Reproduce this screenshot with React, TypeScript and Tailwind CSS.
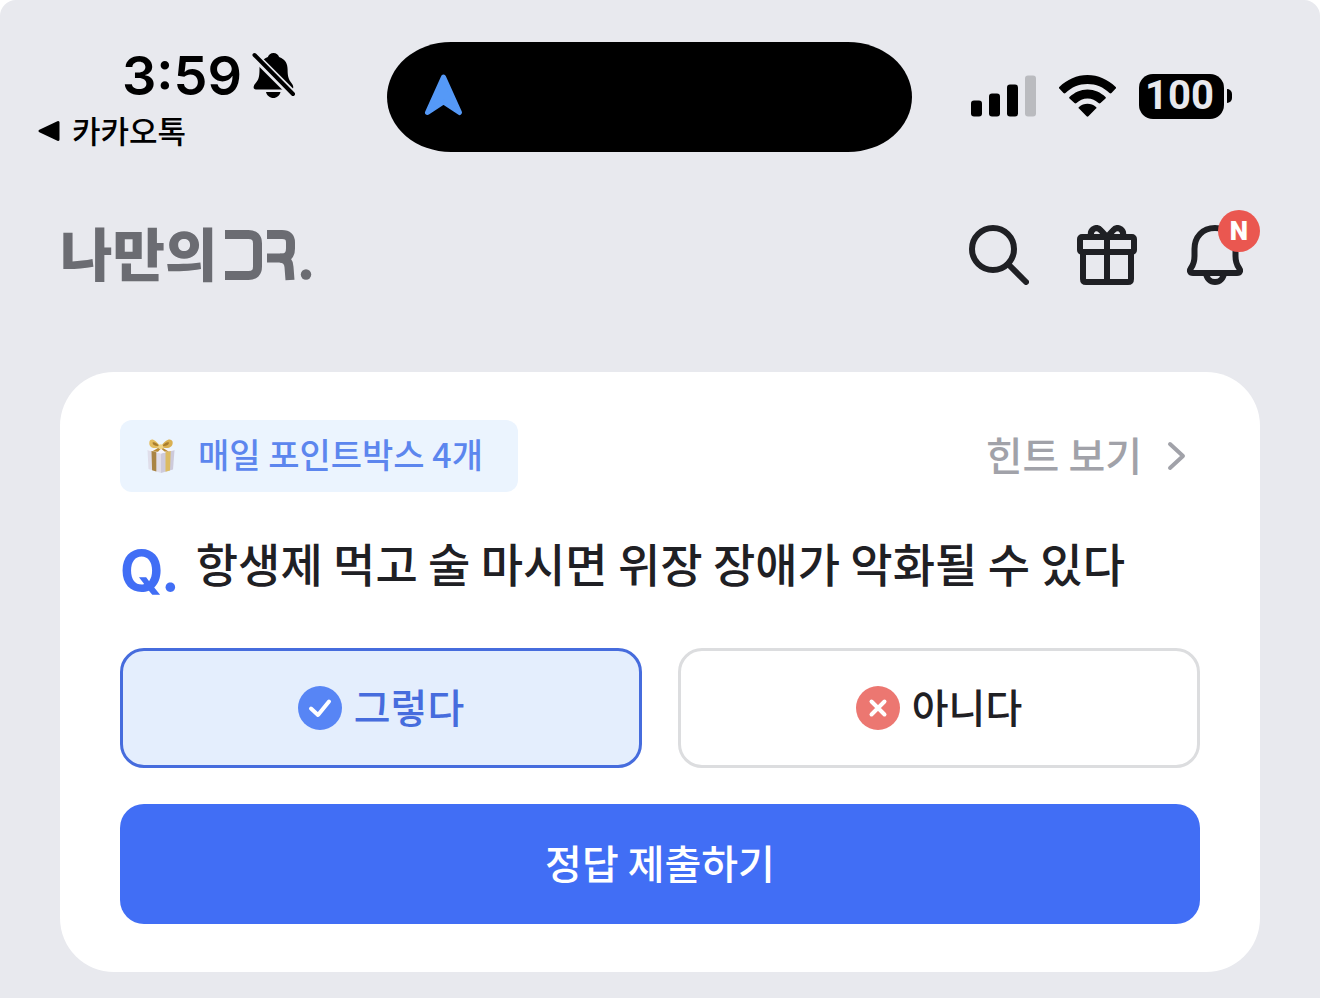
import { useState } from 'react';

const answers = [
  { id: 'yes', label: '그렇다' },
  { id: 'no', label: '아니다' },
];

function SilentBellIcon() {
  return (
    <svg className="h-[48px] w-[44px]" viewBox="0 0 44 48" aria-hidden="true">
      <path
        d="M21.500 1c-2.800 0-5 1.700-5.600 4.100C9.500 7.400 7.500 12 7.500 17.500c0 7.500-1 10.500-4 13.700C1 34 .8 37.500 4 37.500h35c3 0 2.800-3.500.6-6.300-3-3.700-4-6.700-4-13.700 0-5.500-2-10.100-8.500-12.400C26.500 2.700 24.300 1 21.500 1z"
        fill="#000"
      />
      <path d="M14 40h14.500c-.8 3.600-3.800 6-7.200 6s-6.500-2.400-7.300-6z" fill="#000" />
      <path d="M3 4.500L41.500 43" stroke="#e8e9ee" strokeWidth="8.500" />
      <path d="M2.500 3L41 42" stroke="#000" strokeWidth="4" strokeLinecap="round" />
    </svg>
  );
}

function StatusBar() {
  return (
    <div className="grid grid-cols-[1fr_525px_320px] pt-[42px] pr-[88px] pl-9">
      <div>
        <div className="flex h-[68px] items-center gap-[10px] pl-[86px]">
          <span className="font-[Inter] text-[54px] leading-none font-semibold">3:59</span>
          <SilentBellIcon />
        </div>
        <a href="#" className="flex h-[42px] items-center gap-3 text-[31px] leading-none">
          <svg className="h-[22px] w-[24px]" viewBox="0 0 24 22" aria-hidden="true">
            <path d="M4 11L22 2.500v17z" fill="#000" stroke="#000" strokeWidth="3" strokeLinejoin="round" />
          </svg>
          <span className="pb-1 font-medium">카카오톡</span>
        </a>
      </div>

      <div className="flex h-[110px] items-center rounded-[64px/55px] bg-black pb-1 pl-9">
        <svg className="h-[44px] w-[40px]" viewBox="0 0 40 44" aria-hidden="true">
          <path
            d="M20.500 4L4.500 39.500 20.500 29l16 10.500z"
            fill="#5599f7"
            stroke="#5599f7"
            strokeWidth="5"
            strokeLinejoin="round"
          />
        </svg>
      </div>

      <div className="flex h-[110px] items-center justify-end gap-[23px] pb-[2px]">
        <svg className="h-[42px] w-[65px]" viewBox="0 0 65 42" aria-hidden="true">
          <rect x="0" y="25.500" width="11" height="16" rx="3" />
          <rect x="18" y="18.500" width="11" height="23" rx="3" />
          <rect x="36" y="9.500" width="11" height="32" rx="3" />
          <rect x="54" y=".5" width="11" height="41" rx="3" fill="#babbbf" />
        </svg>
        <svg className="h-[42px] w-[57px]" viewBox="0 0 57 42" aria-hidden="true">
          <path d="M0.300 13.500a1 1 0 0 1 0-1.500C8 4.500 18 0 28.500 0S49 4.500 56.700 12a1 1 0 0 1 0 1.500l-4.200 4.500a1.500 1.500 0 0 1-2 0C44.500 12.200 37 9 28.500 9S12.500 12.200 6.500 18a1.500 1.500 0 0 1-2 0z" />
          <path d="M10.500 23.500a1 1 0 0 1 0-1.500c5-4.600 11-7.500 18-7.500s13 2.900 18 7.500a1 1 0 0 1 0 1.500L41.500 28a1.500 1.500 0 0 1-2 0c-3-2.700-6.500-4.500-11-4.500s-8 1.800-11 4.500a1.500 1.500 0 0 1-2 0z" />
          <path d="M20 33.500a1 1 0 0 1 0-1.600c2.500-1.900 5.300-3.100 8.500-3.100s6 1.200 8.500 3.100a1 1 0 0 1 0 1.600l-7.600 7.700a1.300 1.300 0 0 1-1.800 0z" />
        </svg>
        <div className="flex items-center gap-[3px]">
          <div className="flex h-[45px] w-[85px] items-center justify-center rounded-[14px] bg-black pr-1 font-[Roboto] text-[40px] leading-none font-bold text-[#e8e9ee]">
            100
          </div>
          <div className="h-[14px] w-[5px] rounded-r-full bg-black" />
        </div>
      </div>
    </div>
  );
}

function Header() {
  return (
    <header className="mt-[58px] flex h-[90px] items-center justify-between px-[60px]">
      <a href="#" aria-label="나만의 DR." className="flex items-center gap-2 text-[#6b6c72]">
        <span className="pb-2 text-[57px] leading-none font-black">나만의</span>
        <svg className="h-[52px] w-[88px]" viewBox="0 0 88 52" fill="none" stroke="currentColor" strokeWidth="9" aria-hidden="true">
          <path d="M0 5.500h23.500Q32.500 5.500 32.500 14.500v23q0 9-9 9H0" />
          <path d="M42 5.500h15q8.500 0 8.500 8v6q0 9.500-9 9.500H42" />
          <path d="M55 29q8.500.5 9 9l1 13" />
          <circle cx="81" cy="45.500" r="5.200" fill="currentColor" stroke="none" />
        </svg>
      </a>

      <nav className="flex gap-[18px] text-[#1f2024]">
        <button type="button" aria-label="검색" className="flex size-[90px] items-center justify-center">
          <svg className="size-[60px]" viewBox="0 0 60 60" fill="none" stroke="currentColor" strokeWidth="6" strokeLinecap="round" aria-hidden="true">
            <circle cx="24" cy="24" r="21" />
            <path d="M39 39l18 18" />
          </svg>
        </button>
        <button type="button" aria-label="선물" className="flex size-[90px] items-center justify-center">
          <svg className="size-[60px]" viewBox="0 0 60 60" fill="none" stroke="currentColor" strokeWidth="6" strokeLinejoin="round" aria-hidden="true">
            <rect x="3" y="12" width="54" height="15" rx="2" />
            <path d="M6 27v27q0 3 3 3h42q3 0 3-3V27M30 12v45" />
            <path d="M30 12L24 5.500Q20.500 1.500 16.500 4 12.500 7 14.500 12M30 12l6-6.500Q39.500 1.500 43.500 4q4 3 2 8" />
          </svg>
        </button>
        <button type="button" aria-label="새 알림" className="relative flex size-[90px] items-center justify-center">
          <svg className="size-[60px]" viewBox="0 0 60 60" fill="none" stroke="currentColor" strokeWidth="6" strokeLinejoin="round" aria-hidden="true">
            <path d="M30 3C17.500 3 9.500 12 9.500 24v7c0 6-1 8.500-3.500 12-2 3-1 5 2 5h44c3 0 4-2 2-5-2.500-3.500-3.500-6-3.500-12v-7C50.500 12 42.500 3 30 3z" />
            <path d="M21 48c.5 5.500 4.500 9 9 9s8.500-3.500 9-9" />
          </svg>
          <span className="absolute top-0 right-0 flex size-[42px] items-center justify-center rounded-full bg-[#ea5750] font-[Roboto] text-[26px] leading-none font-black text-white">
            N
          </span>
        </button>
      </nav>
    </header>
  );
}

function GiftBoxIcon() {
  return (
    <svg className="h-[36px] w-[30px]" viewBox="0 0 30 36" aria-hidden="true">
      <path d="M1.500 12L15 15.500V35L2.500 31z" fill="#e0deea" />
      <path d="M15 15.500L28.500 12 27 31.500 15 35z" fill="#cdcadb" />
      <path d="M1.500 12L14 9.500 28.500 12 15 15.500z" fill="#f6f5fa" />
      <path d="M5.500 13l4.800 1.200V33.500l-4.200-1.300z" fill="#a98444" />
      <path d="M19.500 14.300l5.200-1.200-.7 19.300-4.500 1.300z" fill="#dcbb62" />
      <path d="M14.500 9C9 1 5 0 3.500 3.500 2.500 8 5 12 14.500 9z" fill="#e3bd60" />
      <path d="M14.500 9C20 .5 25 0 26.500 3.500 27.500 8 24 12 14.500 9z" fill="#d9b052" />
      <path d="M13.500 8C10.500 4.500 8 3.500 6.500 4.500c0 2.500 2.500 4 7 3.500zM16 8c3-3.500 5.500-4.500 7-3.500 0 2.500-2.500 4-7 3.500z" fill="#a97d2d" />
      <path d="M14.500 8.500L6 13.500l6 .2 3-3.200 3.500 3 4.500.3z" fill="#b98b34" />
      <circle cx="14.700" cy="8.700" r="2.500" fill="#f0d488" />
    </svg>
  );
}

function QuizCard() {
  const [answer, setAnswer] = useState('yes');

  return (
    <form
      className="mx-[60px] mt-[72px] rounded-[54px] bg-white px-[60px] py-12"
      onSubmit={(e) => e.preventDefault()}
    >
      <div className="flex items-center justify-between">
        <div className="flex h-[72px] items-center gap-[22px] rounded-xl bg-[#ebf4fe] pr-[35px] pl-[26px] text-[34px] leading-none font-medium text-[#5c86ee]">
          <GiftBoxIcon />
          <span className="pb-1">매일 포인트박스 4개</span>
        </div>
        <a href="#" className="flex items-center gap-6 pr-3 text-[40px] leading-none font-medium text-[#a1a2a9]">
          <span className="pb-1">힌트 보기</span>
          <svg className="h-[30px] w-[22px]" viewBox="0 0 22 30" fill="none" stroke="currentColor" strokeWidth="4" strokeLinecap="round" strokeLinejoin="round" aria-hidden="true">
            <path d="M4 3l13 12L4 27" />
          </svg>
        </a>
      </div>

      <div className="mt-9 flex h-[84px] gap-4">
        <span className="pt-[15px] font-[Inter] text-[56px] leading-none font-bold text-[#416ef5]">Q.</span>
        <h1 className="pt-[11px] text-[46px] leading-none font-medium text-[#1f2024]">
          항생제 먹고 술 마시면 위장 장애가 악화될 수 있다
        </h1>
      </div>

      <div className="mt-9 grid grid-cols-2 gap-9">
        {answers.map((item) => (
          <label
            key={item.id}
            className="flex h-[120px] cursor-pointer items-center justify-center gap-3 rounded-3xl border-3 border-[#dcdddf] text-[40px] leading-none font-medium text-[#1f2024] has-checked:border-[#466cdd] has-checked:bg-[#e4eefd] has-checked:text-[#466cdd]"
          >
            <input
              type="radio"
              name="answer"
              value={item.id}
              checked={answer === item.id}
              onChange={() => setAnswer(item.id)}
              className="sr-only"
            />
            <svg className="size-[44px]" viewBox="0 0 44 44" fill="none" stroke="#fff" strokeWidth="4" strokeLinecap="round" strokeLinejoin="round" aria-hidden="true">
              <circle cx="22" cy="22" r="22" fill={item.id === 'yes' ? '#5785f5' : '#ec7771'} stroke="none" />
              {item.id === 'yes' ? <path d="M13 22.500l7 6.500L31 15.500" /> : <path d="M15.500 15.500l13 13M28.500 15.500l-13 13" />}
            </svg>
            <span className="pb-1">{item.label}</span>
          </label>
        ))}
      </div>

      <button
        type="submit"
        className="mt-9 flex h-[120px] w-full items-center justify-center rounded-3xl bg-[#416ef5] pb-1 text-[40px] leading-none font-medium text-white"
      >
        정답 제출하기
      </button>
    </form>
  );
}

export default function App() {
  return (
    <div className="bg-white">
      <main className="min-h-screen rounded-t-2xl bg-[#e8e9ee] pb-[26px] font-['Noto_Sans_CJK_KR',sans-serif] text-black">
        <StatusBar />
        <Header />
        <QuizCard />
      </main>
    </div>
  );
}
